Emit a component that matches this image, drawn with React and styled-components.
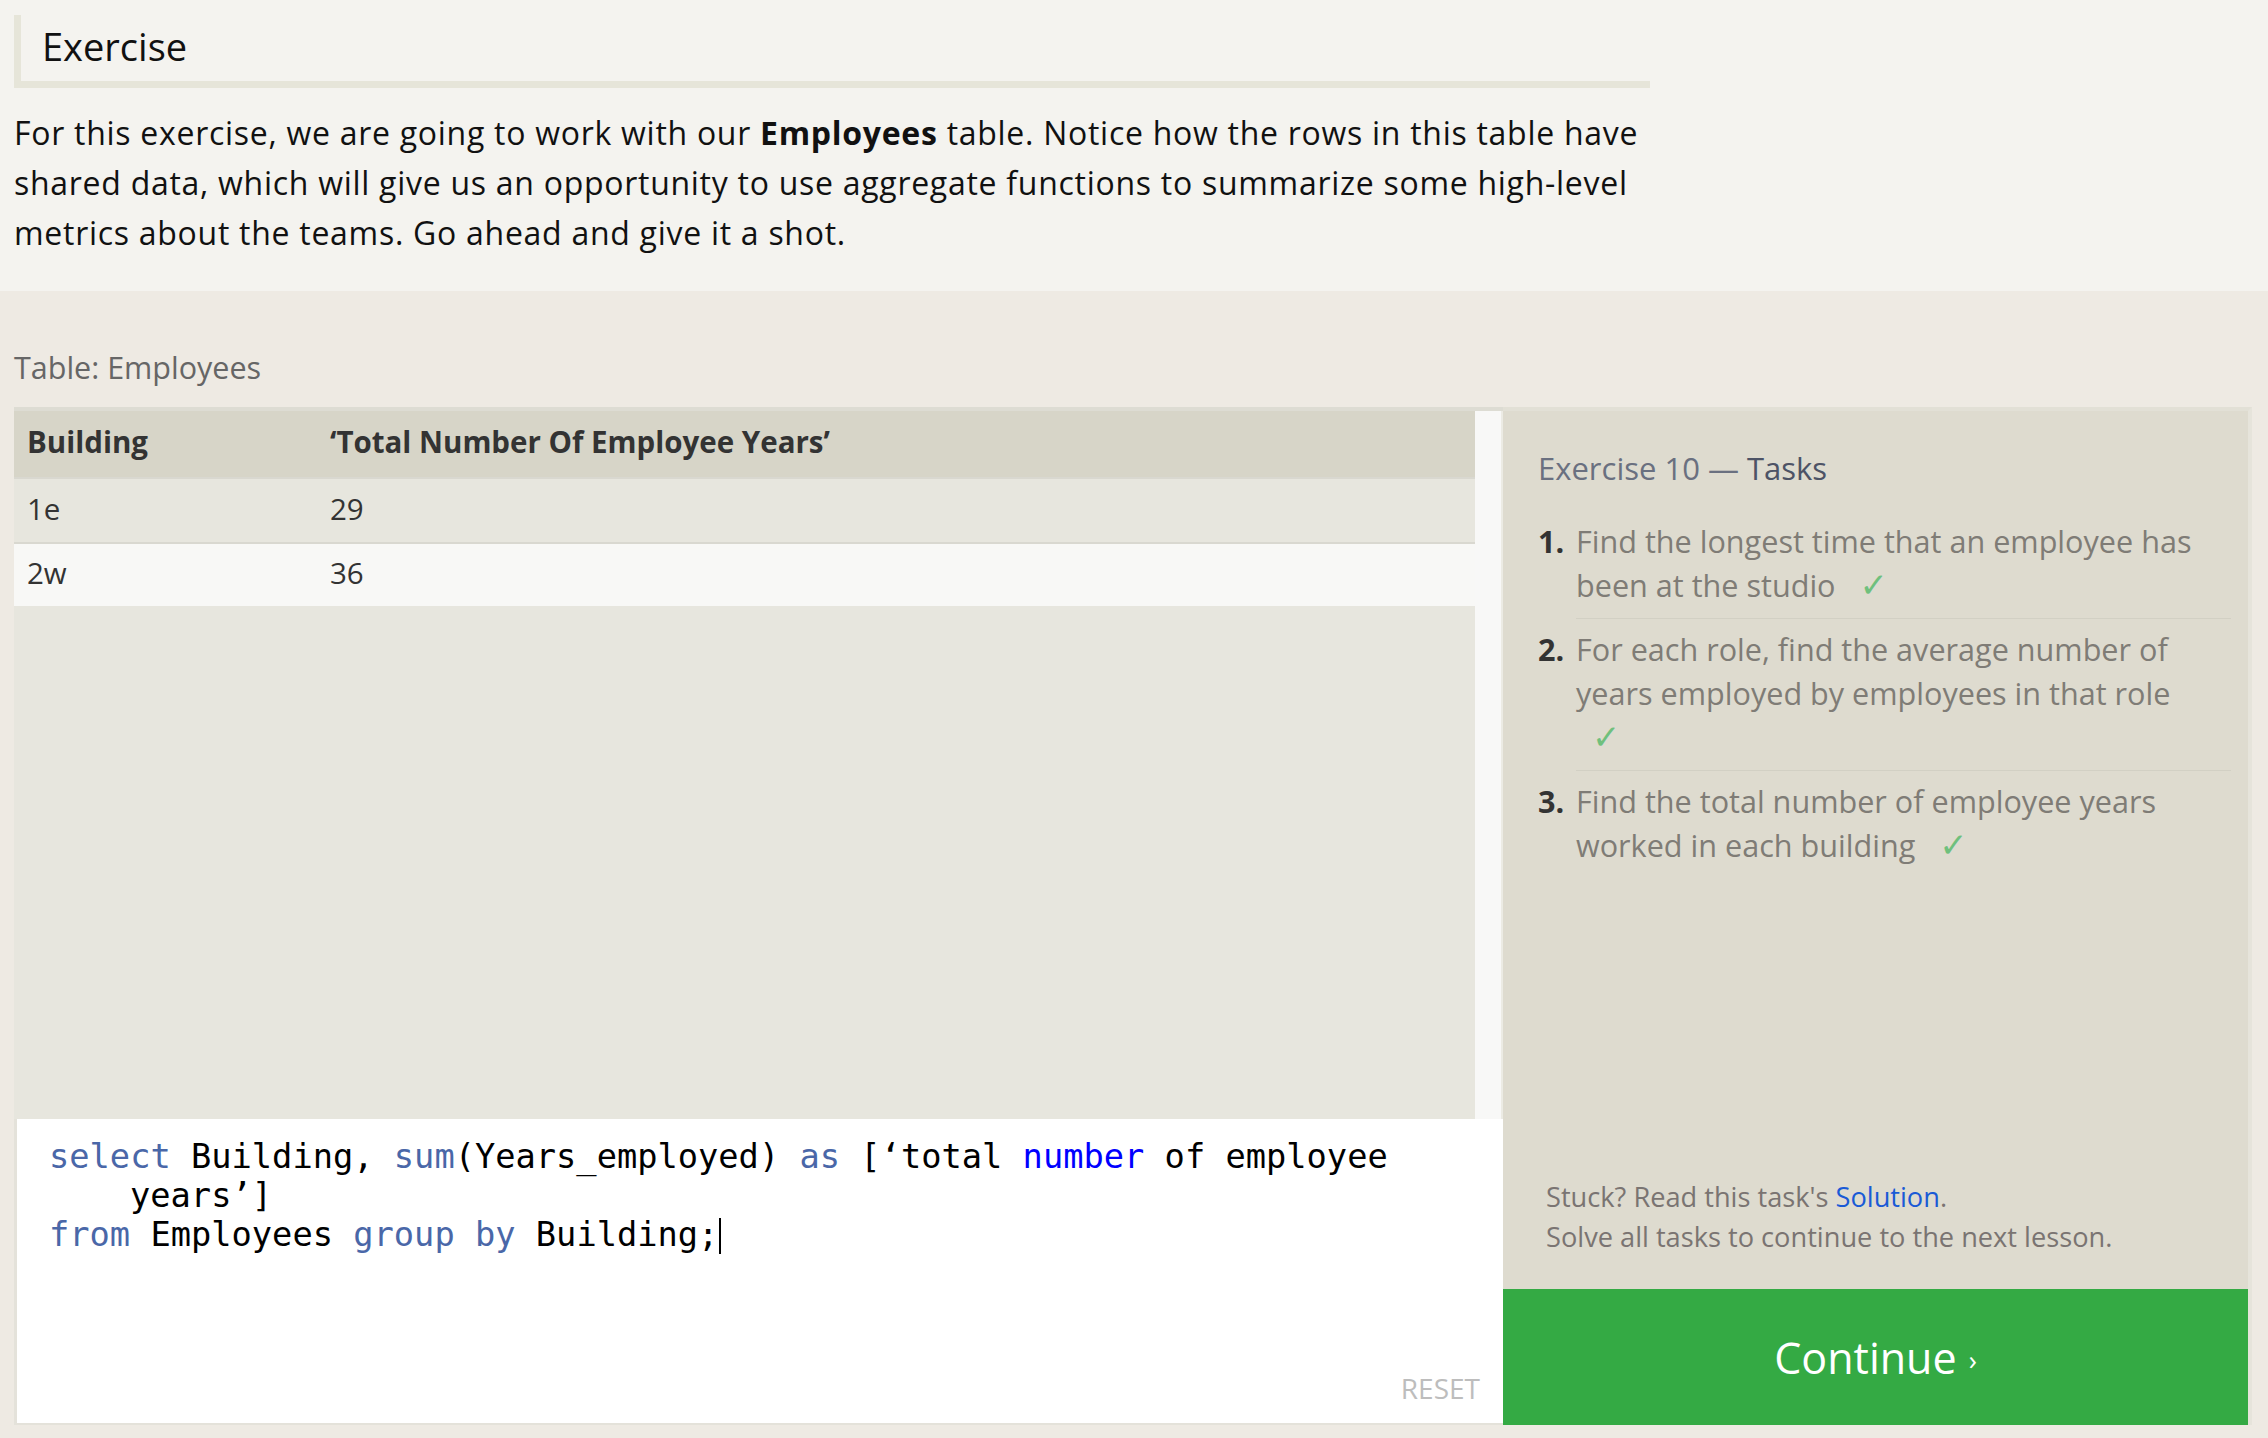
import React from 'react';
import styled, { createGlobalStyle } from 'styled-components';

const GlobalStyle = createGlobalStyle`
  html, body {
    margin: 0;
    padding: 0;
    background: #eeeae3;
  }
  body {
    font-family: "Open Sans", "Noto Sans", sans-serif;
  }
`;

const Page = styled.div`
  min-height: 1438px;
  background: #eeeae3;
`;

const Intro = styled.section`
  box-sizing: border-box;
  height: 291px;
  padding: 15px 14px 0;
  background: #f4f3ef;
`;

const Heading = styled.h1`
  box-sizing: border-box;
  width: 1636px;
  height: 73px;
  margin: 0;
  padding-left: 21px;
  border-left: 7px solid #e6e5d9;
  border-bottom: 7px solid #e6e5d9;
  font-size: 38px;
  font-weight: normal;
  line-height: 63px;
  color: #111;
`;

const Lead = styled.p`
  width: 1650px;
  margin: 20px 0 0;
  font-size: 32px;
  letter-spacing: 0.72px;
  line-height: 50px;
  color: #111;

  strong {
    font-weight: bold;
  }
`;

const Work = styled.section`
  padding: 58px 16px 0 14px;
`;

const TableLabel = styled.div`
  margin-bottom: 22px;
  font-size: 30.5px;
  line-height: 36px;
  color: #666;
`;

const Split = styled.div`
  display: grid;
  grid-template-columns: 1489px 749px;
  height: 1018px;
`;

const LeftCol = styled.div`
  display: flex;
  flex-direction: column;
`;

const TableBox = styled.div`
  display: flex;
  height: 712px;
  box-sizing: border-box;
  border-top: 4px solid #dddcd3;
  background: #e7e6de;
`;

const Grid = styled.div`
  flex: 1;
`;

const ScrollTrack = styled.div`
  width: 26px;
  background: #f8f8f7;
  border-right: 2px solid #ecebe4;
`;

const Row = styled.div`
  display: grid;
  grid-template-columns: 303px 1fr;
  box-sizing: border-box;
  height: ${(p) => p.h}px;
  align-items: center;
  padding: 0 0 5px 13px;
  background: ${(p) => p.bg};
  border-bottom: ${(p) => (p.line ? '2px solid #d9d8d0' : 'none')};
  font-size: 29.5px;
  font-weight: ${(p) => (p.head ? 'bold' : 'normal')};
  color: #333;
`;

const Editor = styled.div`
  display: flex;
  flex-direction: column;
  flex: 1;
  box-sizing: border-box;
  padding: 18px 23px 20px 32px;
  background: #fff;
  border-left: 3px solid #e4e2da;
  border-bottom: 2px solid #e4e2da;
`;

const Code = styled.pre`
  margin: 0;
  font-family: "DejaVu Sans Mono", "Liberation Mono", monospace;
  font-size: 33.7px;
  line-height: 39px;
  color: #000;
`;

const CodeLine = styled.div`
  padding-left: ${(p) => (p.wrap ? '81px' : '0')};
`;

const Kw = styled.span`
  color: ${(p) => (p.builtin ? '#0000ff' : '#4a67a8')};
`;

const Caret = styled.span`
  display: inline-block;
  width: 2px;
  height: 36px;
  margin-left: 1px;
  vertical-align: -8px;
  background: #000;
`;

const Reset = styled.div`
  margin-top: auto;
  align-self: flex-end;
  font-size: 28px;
  line-height: 30px;
  color: #bdbdbd;
`;

const Panel = styled.aside`
  display: flex;
  flex-direction: column;
  box-sizing: border-box;
  background: #dedbcf;
  border-top: 4px solid #e2e0d6;
  border-right: 4px solid #e6e4db;
`;

const PanelBody = styled.div`
  display: flex;
  flex-direction: column;
  flex: 1;
  padding: 37px 0 0 35px;
`;

const PanelTitle = styled.h2`
  margin: 0 0 23px;
  font-size: 31px;
  font-weight: normal;
  line-height: 40px;
  color: #6a7080;

  span {
    color: #4d5366;
  }
`;

const Tasks = styled.ol`
  margin: 0;
  padding: 0;
  list-style: none;
`;

const Task = styled.li`
  display: grid;
  grid-template-columns: 38px 1fr;
  padding-top: 8px;
  font-size: 30.6px;
  line-height: 44px;
  color: #7f7c76;
`;

const Num = styled.span`
  font-weight: bold;
  color: #333;
`;

const TaskText = styled.span`
  margin-right: 17px;
  padding: 0 30px 11px 0;
  border-bottom: ${(p) => (p.last ? 'none' : '1px solid #d2d0c4')};
`;

const Check = styled.span`
  display: inline-block;
  margin-left: 16px;
  color: #6fc07d;
  font-family: "DejaVu Sans", sans-serif;
  font-size: 34px;
  line-height: 40px;
`;

const Stuck = styled.div`
  margin-top: auto;
  margin-bottom: 32px;
  padding-left: 8px;
  font-size: 27.2px;
  line-height: 40px;
  color: #7a7472;

  a {
    color: #1a5ad6;
    text-decoration: none;
  }
`;

const ContinueButton = styled.button`
  height: 136px;
  border: none;
  background: #34aa44;
  color: #fff;
  font-family: "Open Sans", "Noto Sans", sans-serif;
  font-size: 43px;
  cursor: pointer;

  small {
    font-size: 27px;
    margin-left: 12px;
    vertical-align: 4px;
  }
`;

const tasks = [
  'Find the longest time that an employee has been at the studio',
  'For each role, find the average number of years employed by employees in that role',
  'Find the total number of employee years worked in each building',
];

export default function App() {
  return (
    <Page>
      <GlobalStyle />
      <Intro>
        <Heading>Exercise</Heading>
        <Lead>
          For this exercise, we are going to work with our <strong>Employees</strong> table.
          Notice how the rows in this table have shared data, which will give us an opportunity
          to use aggregate functions to summarize some high-level metrics about the teams. Go
          ahead and give it a shot.
        </Lead>
      </Intro>
      <Work>
        <TableLabel>Table: Employees</TableLabel>
        <Split>
          <LeftCol>
            <TableBox>
              <Grid>
                <Row head h={68} bg="#d7d5c8" line>
                  <span>Building</span>
                  <span>‘Total Number Of Employee Years’</span>
                </Row>
                <Row h={65} bg="#e7e6de" line>
                  <span>1e</span>
                  <span>29</span>
                </Row>
                <Row h={62} bg="#f8f8f6">
                  <span>2w</span>
                  <span>36</span>
                </Row>
              </Grid>
              <ScrollTrack />
            </TableBox>
            <Editor>
              <Code>
                <CodeLine>
                  <Kw>select</Kw> Building, <Kw>sum</Kw>(Years_employed) <Kw>as</Kw> [‘total{' '}
                  <Kw builtin>number</Kw> of employee
                </CodeLine>
                <CodeLine wrap>years’]</CodeLine>
                <CodeLine>
                  <Kw>from</Kw> Employees <Kw>group</Kw> <Kw>by</Kw> Building;<Caret />
                </CodeLine>
              </Code>
              <Reset>RESET</Reset>
            </Editor>
          </LeftCol>
          <Panel>
            <PanelBody>
              <PanelTitle>
                Exercise 10 — <span>Tasks</span>
              </PanelTitle>
              <Tasks>
                {tasks.map((t, i) => (
                  <Task key={i}>
                    <Num>{i + 1}.</Num>
                    <TaskText last={i === tasks.length - 1}>
                      {t} <Check>✓</Check>
                    </TaskText>
                  </Task>
                ))}
              </Tasks>
              <Stuck>
                Stuck? Read this task's <a href="#solution">Solution</a>.
                <br />
                Solve all tasks to continue to the next lesson.
              </Stuck>
            </PanelBody>
            <ContinueButton>
              Continue<small>›</small>
            </ContinueButton>
          </Panel>
        </Split>
      </Work>
    </Page>
  );
}
